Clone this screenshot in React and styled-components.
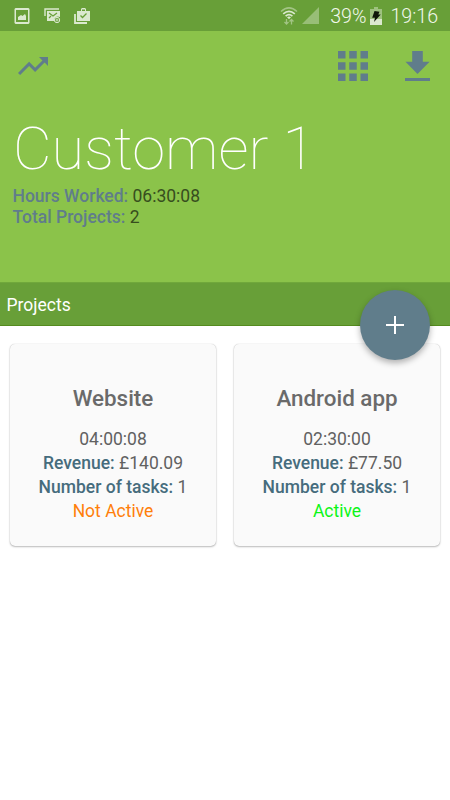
import React from "react";
import styled, { createGlobalStyle } from "styled-components";

const GlobalStyle = createGlobalStyle`
  * { box-sizing: border-box; }
  body { margin: 0; background: #fff; font-family: Roboto, sans-serif; overflow: hidden; }
`;

const Screen = styled.div`
  display: flex;
  flex-direction: column;
  width: 450px;
  height: 800px;
  background: #fff;
  overflow: hidden;
`;

const StatusBar = styled.div`
  display: flex;
  align-items: center;
  justify-content: space-between;
  height: 31px;
  padding: 0 12px 0 14px;
  background: #689f38;
  color: #dbe9cf;
`;

const StatusGroup = styled.div`
  display: flex;
  align-items: center;
`;

const StatusText = styled.span`
  margin-left: ${(p) => p.$gap}px;
  padding-top: 2px;
  font-size: 19.6px;
  line-height: 31px;
  font-weight: 300;
  color: #f2f8ec;
`;

const Icon = styled.svg`
  display: block;
  flex: none;
  margin-left: ${(p) => p.$gap || 0}px;
`;

const Header = styled.header`
  height: 251px;
  background: #8bc34a;
`;

const Toolbar = styled.div`
  display: flex;
  align-items: center;
  justify-content: space-between;
  height: 70px;
  padding: 0 20px 0 15px;
`;

const ToolbarActions = styled.div`
  display: flex;
  gap: 37px;
`;

const CustomerName = styled.h1`
  margin: 12px 0 0 13px;
  font-size: 59.6px;
  line-height: 72px;
  font-weight: 100;
  color: #fff;
  white-space: nowrap;
`;

const Summary = styled.div`
  margin: 1px 0 0 12.5px;
  font-size: 17.5px;
  line-height: 20.5px;
  color: #374e1e;
`;

const Label = styled.span`
  font-weight: 500;
  color: ${(p) => p.$color};
`;

const ProjectsBar = styled.div`
  position: relative;
  display: flex;
  align-items: center;
  height: 44px;
  padding: 2px 0 0 6.5px;
  background: #689f38;
  border-top: 1px solid #70a83b;
  border-bottom: 1px solid #558b1f;
  color: #fff;
  font-size: 17.5px;
`;

const AddButton = styled.button`
  position: absolute;
  right: 20px;
  top: 7px;
  display: grid;
  place-items: center;
  width: 70px;
  height: 70px;
  padding: 0;
  border: 0;
  border-radius: 50%;
  background: #607d8b;
  box-shadow: 0 3px 6px rgba(0, 0, 0, 0.3);
`;

const Cards = styled.main`
  display: grid;
  grid-template-columns: 206px 206px;
  gap: 18px;
  padding: 18px 10px;
`;

const Card = styled.article`
  height: 202px;
  padding-top: 39px;
  border-radius: 5px;
  background: #fafafa;
  box-shadow: 0 0 1px rgba(0, 0, 0, 0.25), 0 1px 2px rgba(0, 0, 0, 0.26);
  text-align: center;
`;

const CardTitle = styled.h2`
  margin: 0 0 14px;
  font-size: 22.4px;
  line-height: 30px;
  font-weight: 500;
  color: #6a6a6a;
`;

const CardLine = styled.div`
  font-size: 17.5px;
  line-height: 24px;
  color: ${(p) => p.$color || "#616161"};
`;

const projects = [
  { name: "Website", time: "04:00:08", revenue: "£140.09", tasks: 1, active: false },
  { name: "Android app", time: "02:30:00", revenue: "£77.50", tasks: 1, active: true },
];

export default function App() {
  return (
    <Screen>
      <GlobalStyle />
      <StatusBar>
        <StatusGroup>
          <Icon width="16" height="16" viewBox="0 0 16 16">
            <path fill="currentColor" fillRule="evenodd" d="M1.5 0h13l1 1v14l-1 1h-13l-1-1V1zM2 2v12h12V2zM4 12V9l3-2 1.5 1L11 6l1 2v4z" />
          </Icon>
          <Icon width="17" height="16" viewBox="0 0 17 16" $gap={14}>
            <path fill="none" stroke="currentColor" strokeWidth="1.4" d="M1 8V1h14" />
            <path fill="currentColor" d="M3 3h13v6a4 4 0 0 0-6 4H3z" />
            <path fill="none" stroke="#689f38" strokeWidth="1.2" d="M5 5l4 3 4-3M5 10l2-2" />
            <circle cx="13" cy="12" r="2.7" fill="none" stroke="currentColor" />
            <circle cx="13" cy="12" r="1" fill="none" stroke="currentColor" strokeWidth=".8" />
          </Icon>
          <Icon width="17" height="16" viewBox="0 0 17 16" $gap={13}>
            <path fill="none" stroke="currentColor" strokeWidth="1.8" d="M1 6v9h12" />
            <path fill="currentColor" fillRule="evenodd" d="M3 3h4V1l1-1h3l1 1v2h4v10H3zM8 1.5V3h3V1.5z" />
            <path fill="none" stroke="#689f38" strokeWidth="1.3" d="M6.5 7.5l2 2 4-4" />
          </Icon>
        </StatusGroup>
        <StatusGroup>
          <Icon width="18" height="18" viewBox="0 0 18 18">
            <path fill="none" stroke="currentColor" strokeWidth="1.6" opacity=".5" d="M1 4.5Q9-2.8 17 4.5" />
            <path fill="none" stroke="currentColor" strokeWidth="1.7" d="M3.2 6.8Q9 1.8 14.8 6.8M5.6 9.1Q9 6.2 12.4 9.1" />
            <path fill="currentColor" d="M7 10.2q2-1.2 4 0l-2 2z" />
            <path fill="none" stroke="currentColor" strokeWidth="1.3" opacity=".5" d="M6.5 12v5m-2-2 2 2 2-2M11.5 17.5v-5m-2 2 2-2 2 2" />
          </Icon>
          <Icon width="17" height="17" viewBox="0 0 17 17" $gap={4}>
            <path fill="currentColor" opacity=".42" d="M17 0v17H0z" />
          </Icon>
          <StatusText $gap={11}>39%</StatusText>
          <Icon width="12" height="18" viewBox="0 0 12 18" $gap={4}>
            <path fill="currentColor" opacity=".48" d="M0 2h4V0h4v2h4v10H0z" />
            <path fill="currentColor" d="M0 12h12v6H0z" />
            <path fill="#10180a" d="M4.5 4l5 .8L8.3 7.5h2.4L4 15l1-4.2H2.2z" />
          </Icon>
          <StatusText $gap={8}>19:16</StatusText>
        </StatusGroup>
      </StatusBar>
      <Header>
        <Toolbar>
          <Icon width="36" height="36" viewBox="0 0 24 24">
            <path fill="#607d8b" d="M16 6l2.29 2.29-4.88 4.88-4-4L2 16.59 3.41 18l6-6 4 4 6.3-6.29L22 12V6z" />
          </Icon>
          <ToolbarActions>
            <Icon width="30" height="30" viewBox="0 0 30 30">
              <path fill="#607d8b" d="M0 0h7.5v7.5H0zM11.25 0h7.5v7.5h-7.5zM22.5 0H30v7.5h-7.5zM0 11.25h7.5v7.5H0zM11.25 11.25h7.5v7.5h-7.5zM22.5 11.25H30v7.5h-7.5zM0 22.5h7.5V30H0zM11.25 22.5h7.5V30h-7.5zM22.5 22.5H30V30h-7.5z" />
            </Icon>
            <Icon width="25" height="30" viewBox="0 0 25 30">
              <path fill="#607d8b" d="M7.2 0h10.6v10.7H24.6L12.5 23 .5 10.7h6.7zM0 26.9h25V30H0z" />
            </Icon>
          </ToolbarActions>
        </Toolbar>
        <CustomerName>Customer 1</CustomerName>
        <Summary>
          <div><Label $color="#607d8b">Hours Worked:</Label> 06:30:08</div>
          <div><Label $color="#607d8b">Total Projects:</Label> 2</div>
        </Summary>
      </Header>
      <ProjectsBar>
        Projects
        <AddButton aria-label="Add project">
          <Icon width="18" height="18" viewBox="0 0 18 18">
            <path fill="#fff" d="M8 0h2v8h8v2h-8v8H8v-8H0V8h8z" />
          </Icon>
        </AddButton>
      </ProjectsBar>
      <Cards>
        {projects.map((p) => (
          <Card key={p.name}>
            <CardTitle>{p.name}</CardTitle>
            <CardLine>{p.time}</CardLine>
            <CardLine><Label $color="#466c7d">Revenue:</Label> {p.revenue}</CardLine>
            <CardLine><Label $color="#466c7d">Number of tasks:</Label> {p.tasks}</CardLine>
            <CardLine $color={p.active ? "#0cf516" : "#ff7f0a"}>{p.active ? "Active" : "Not Active"}</CardLine>
          </Card>
        ))}
      </Cards>
    </Screen>
  );
}
